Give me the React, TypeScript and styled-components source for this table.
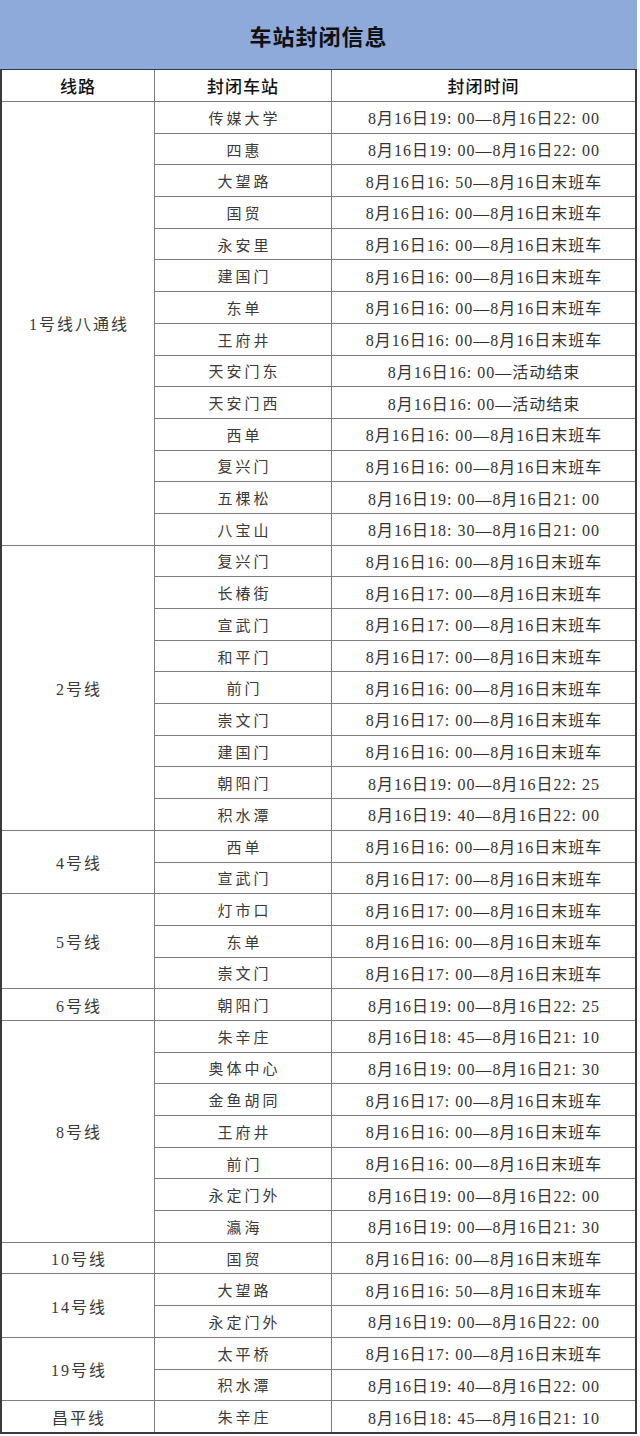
import React from 'react';
import styled, { createGlobalStyle } from 'styled-components';

const GlobalStyle = createGlobalStyle`
  html, body {
    margin: 0;
    padding: 0;
    background: #fff;
  }
  body {
    width: 640px;
    font-family: "Liberation Serif", "Noto Sans CJK SC", serif;
  }
`;

const Page = styled.div`
  width: 637px;
`;

const TitleBar = styled.div`
  height: 69px;
  background: #8eaadb;
  border-bottom: 1px solid #2f3a52;
  display: flex;
  align-items: center;
  justify-content: center;
  font-family: "Noto Sans CJK SC", sans-serif;
  font-size: 22px;
  font-weight: 700;
  letter-spacing: 1px;
  color: #111;
`;

const Table = styled.div`
  display: grid;
  grid-template-columns: 152px 176px 303px;
  grid-template-rows: 31px repeat(42, 30.69px);
  gap: 1px;
  background: #7c7c7c;
  border: 2px solid #3a3a3a;
  border-top: none;
`;

const HeadCell = styled.div`
  background: #fff;
  display: flex;
  align-items: center;
  justify-content: center;
  font-family: "Noto Sans CJK SC", sans-serif;
  font-size: 17px;
  font-weight: 500;
  color: #111;
  letter-spacing: 1px;
`;

const LineCell = styled.div<{ $span: number }>`
  grid-column: 1;
  grid-row: span ${(p) => p.$span};
  background: #fff;
  display: flex;
  align-items: center;
  justify-content: center;
  font-size: 16px;
  letter-spacing: 2px;
  padding-left: 2px;
  color: #3a3a3a;
`;

const StationCell = styled.div`
  grid-column: 2;
  background: #fff;
  display: flex;
  align-items: center;
  justify-content: center;
  font-size: 15px;
  letter-spacing: 3px;
  padding-left: 3px;
  color: #3a3a3a;
`;

const TimeCell = styled.div`
  grid-column: 3;
  background: #fff;
  display: flex;
  align-items: center;
  justify-content: center;
  font-size: 16px;
  letter-spacing: 1px;
  padding-left: 1px;
  color: #333;
  white-space: pre;
`;

type Group = { line: string; stops: [string, string][] };

const t = (a: string, b: string) => `8月16日${a}—8月16日${b}`;
const END = '末班车';

const groups: Group[] = [
  {
    line: '1号线八通线',
    stops: [
      ['传媒大学', t('19: 00', '22: 00')],
      ['四惠', t('19: 00', '22: 00')],
      ['大望路', t('16: 50', END)],
      ['国贸', t('16: 00', END)],
      ['永安里', t('16: 00', END)],
      ['建国门', t('16: 00', END)],
      ['东单', t('16: 00', END)],
      ['王府井', t('16: 00', END)],
      ['天安门东', '8月16日16: 00—活动结束'],
      ['天安门西', '8月16日16: 00—活动结束'],
      ['西单', t('16: 00', END)],
      ['复兴门', t('16: 00', END)],
      ['五棵松', t('19: 00', '21: 00')],
      ['八宝山', t('18: 30', '21: 00')],
    ],
  },
  {
    line: '2号线',
    stops: [
      ['复兴门', t('16: 00', END)],
      ['长椿街', t('17: 00', END)],
      ['宣武门', t('17: 00', END)],
      ['和平门', t('17: 00', END)],
      ['前门', t('16: 00', END)],
      ['崇文门', t('17: 00', END)],
      ['建国门', t('16: 00', END)],
      ['朝阳门', t('19: 00', '22: 25')],
      ['积水潭', t('19: 40', '22: 00')],
    ],
  },
  {
    line: '4号线',
    stops: [
      ['西单', t('16: 00', END)],
      ['宣武门', t('17: 00', END)],
    ],
  },
  {
    line: '5号线',
    stops: [
      ['灯市口', t('17: 00', END)],
      ['东单', t('16: 00', END)],
      ['崇文门', t('17: 00', END)],
    ],
  },
  {
    line: '6号线',
    stops: [['朝阳门', t('19: 00', '22: 25')]],
  },
  {
    line: '8号线',
    stops: [
      ['朱辛庄', t('18: 45', '21: 10')],
      ['奥体中心', t('19: 00', '21: 30')],
      ['金鱼胡同', t('17: 00', END)],
      ['王府井', t('16: 00', END)],
      ['前门', t('16: 00', END)],
      ['永定门外', t('19: 00', '22: 00')],
      ['瀛海', t('19: 00', '21: 30')],
    ],
  },
  {
    line: '10号线',
    stops: [['国贸', t('16: 00', END)]],
  },
  {
    line: '14号线',
    stops: [
      ['大望路', t('16: 50', END)],
      ['永定门外', t('19: 00', '22: 00')],
    ],
  },
  {
    line: '19号线',
    stops: [
      ['太平桥', t('17: 00', END)],
      ['积水潭', t('19: 40', '22: 00')],
    ],
  },
  {
    line: '昌平线',
    stops: [['朱辛庄', t('18: 45', '21: 10')]],
  },
];

export default function App() {
  return (
    <Page>
      <GlobalStyle />
      <TitleBar>车站封闭信息</TitleBar>
      <Table>
        <HeadCell>线路</HeadCell>
        <HeadCell>封闭车站</HeadCell>
        <HeadCell>封闭时间</HeadCell>
        {groups.map((g) => (
          <React.Fragment key={g.line}>
            <LineCell $span={g.stops.length}>{g.line}</LineCell>
            {g.stops.map(([name, time], i) => (
              <React.Fragment key={i}>
                <StationCell>{name}</StationCell>
                <TimeCell>{time}</TimeCell>
              </React.Fragment>
            ))}
          </React.Fragment>
        ))}
      </Table>
    </Page>
  );
}
